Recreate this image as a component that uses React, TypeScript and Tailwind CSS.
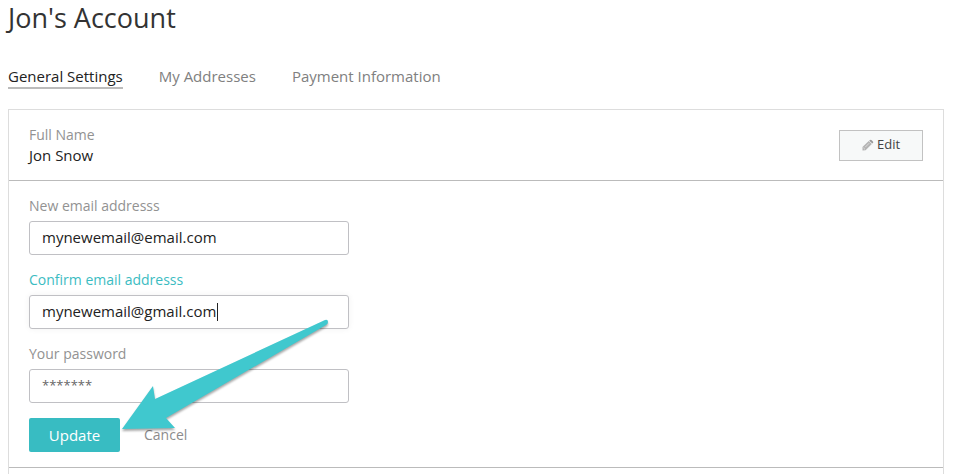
import { type ReactNode } from "react";

const tabs = ["General Settings", "My Addresses", "Payment Information"];

type FieldProps = {
  id: string;
  label: string;
  value: string;
  active?: boolean;
  muted?: boolean;
  children?: ReactNode;
};

function Field({ id, label, value, active, muted, children }: FieldProps) {
  return (
    <div className="flex flex-col gap-[5px]">
      <label
        htmlFor={id}
        className={`self-start text-sm leading-5 ${active ? "text-[#3bbcc2]" : "text-[#929292]"}`}
      >
        {label}
      </label>
      <div className="relative w-full max-w-80">
        <input
          id={id}
          type="text"
          defaultValue={value}
          className={`block h-[34px] w-full rounded-[3px] border border-[#c0c0c4] bg-white px-3 pb-0.5 font-medium outline-none ${muted ? "text-[13px] text-[#666]" : "text-[15px] text-[#222]"} ${active ? "shadow-[0_0_6px_rgba(0,0,0,0.06)]" : ""}`}
        />
        {children}
      </div>
    </div>
  );
}

function Arrow() {
  return (
    <svg
      aria-hidden="true"
      viewBox="0 0 212 120"
      className="pointer-events-none absolute bottom-[29px] left-[111px] h-[120px] w-[212px] overflow-visible drop-shadow-[0_2px_1px_rgba(0,0,0,0.35)]"
    >
      <path
        d="M2 111 L33 68 L35 81 L205 2 Q208 1 208 4 Q208 6 206 7 L46 100 L55 110 Z"
        fill="#40c8ce"
      />
    </svg>
  );
}

export default function App() {
  return (
    <main className="bg-white pr-[10px] pl-2 font-['Open_Sans','Noto_Sans',sans-serif]">
      <h1 className="text-[27px] leading-9 text-[#333]">Jon's Account</h1>
      <nav className="mt-[30px] flex gap-9 text-[15px] leading-5 font-medium">
        {tabs.map((tab, i) => (
          <a
            key={tab}
            href="#"
            className={`border-b-2 pb-px ${i === 0 ? "border-[#bbb] text-[#222]" : "border-transparent text-[#808080]"}`}
          >
            {tab}
          </a>
        ))}
      </nav>
      <div className="mt-5 border-x border-t border-[#ddd]">
        <section className="flex items-center justify-between border-b border-[#bbb] px-5 py-[15px]">
          <div>
            <p className="text-sm leading-5 text-[#929292]">Full Name</p>
            <p className="text-[15px] leading-5 font-medium text-[#222]">Jon Snow</p>
          </div>
          <button
            type="button"
            className="flex h-[31px] w-[84px] items-center justify-center gap-[3px] border border-[#c2c2c2] bg-[#f7f9f9] text-[13px] font-medium text-[#444]"
          >
            <svg aria-hidden="true" viewBox="0 0 12 12" className="size-3">
              <path d="M0.5 8 L6.7 2 L9.8 5 L3.6 11.2 L0.5 11.5 Z" fill="#b4b4b4" />
              <path d="M7.7 1.2 Q8.7 0.3 9.7 1.2 L10.9 2.4 Q11.7 3.3 10.9 4.1 L10.3 4.6 L7.2 1.7 Z" fill="#999" />
              <path d="M1.4 8.8 L3 10.4 M3.2 8.2 L7.2 4.2" stroke="#eee" strokeWidth="0.7" />
            </svg>
            Edit
          </button>
        </section>
        <form
          className="relative flex flex-col gap-[15px] border-b border-[#bbb] px-5 py-[15px]"
          onSubmit={(e) => e.preventDefault()}
        >
          <Field id="email" label="New email addresss" value="mynewemail@email.com" />
          <Field id="confirm" label="Confirm email addresss" value="mynewemail@gmail.com" active>
            <span className="absolute top-2 left-[188px] h-[18px] w-px bg-[#222]" />
          </Field>
          <Field id="password" label="Your password" value="*******" muted />
          <div className="flex items-center gap-6">
            <button
              type="submit"
              className="h-[34px] w-[91px] rounded-[2px] bg-[#38bcc2] text-[15px] text-white"
            >
              Update
            </button>
            <button type="button" className="text-sm text-[#8c8c8c]">
              Cancel
            </button>
          </div>
          <Arrow />
        </form>
        <div className="h-[6px]" />
      </div>
    </main>
  );
}
